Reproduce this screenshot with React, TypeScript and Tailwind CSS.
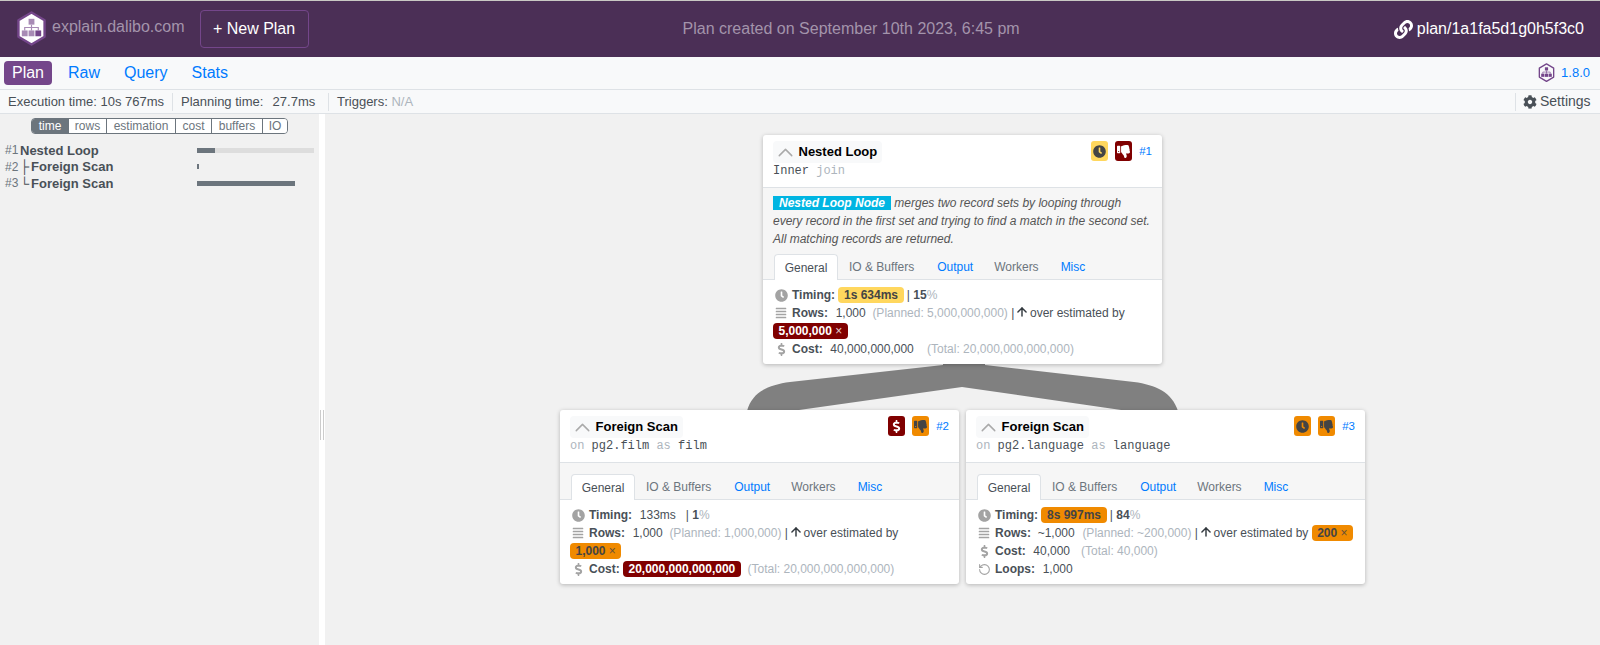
import React from 'react';
import { FaClock, FaThumbsDown, FaDollarSign, FaLink, FaCog, FaAlignJustify } from 'react-icons/fa';
import { ArrowUp, ChevronUp, RotateCcw } from 'lucide-react';

function Logo({ size, dark }: { size: number; dark?: boolean }) {
  return (
    <svg width={size} height={size * 1.13} viewBox="0 0 32 36">
      <path d="M16 1.5 29.5 9.5v17L16 34.500 2.500 26.500v-17z" fill={dark ? 'none' : '#fff'} stroke="#74468a" strokeWidth="2.500" strokeLinejoin="round" />
      <g fill={dark ? '#74468a' : '#a88bb5'}>
        <rect x="13" y="8" width="6" height="6" />
        <rect x="6" y="20" width="6" height="6" />
        <rect x="13" y="20" width="6" height="6" />
        <rect x="20" y="20" width="6" height="6" fill="#74468a" />
      </g>
      <path d="M16 14v6M9 20v-3h14v3" fill="none" stroke={dark ? '#74468a' : '#a88bb5'} strokeWidth="1.200" />
    </svg>
  );
}

function Badge({ color, children }: { color: 'yellow' | 'red' | 'orange'; children: React.ReactNode }) {
  const cls =
    color === 'yellow'
      ? 'bg-[#ffd75e] text-[#444]'
      : color === 'red'
        ? 'bg-[#800000] text-white'
        : 'bg-[#f08a00] text-[#444]';
  return <span className={`flex h-[20px] w-[17px] items-center justify-center rounded-[3px] text-[13px] ${cls}`}>{children}</span>;
}

function Pill({ color, children }: { color: 'yellow' | 'red' | 'orange'; children: React.ReactNode }) {
  const cls =
    color === 'yellow'
      ? 'bg-[#ffd75e] text-[#444]'
      : color === 'red'
        ? 'bg-[#800000] text-white'
        : 'bg-[#f08a00] text-[#444]';
  return <span className={`inline-block rounded-[4px] px-[5.500px] text-[12px] leading-[16px] font-bold ${cls}`}>{children}</span>;
}

function Times() {
  return <span className="font-normal opacity-80"> ×</span>;
}

function Row({ icon, children }: { icon: React.ReactNode; children: React.ReactNode }) {
  return (
    <div className="flex h-[18px] items-center whitespace-pre">
      <span className="mr-[3px] flex w-[16px] shrink-0 items-center justify-center text-[#a3a3a3]">{icon}</span>
      <span>{children}</span>
    </div>
  );
}

function Label({ children }: { children: React.ReactNode }) {
  return <b className="font-bold text-[#495057]">{children}</b>;
}

function Val({ children }: { children: React.ReactNode }) {
  return <span className="ml-[1px]">{children}</span>;
}

function Muted({ children }: { children: React.ReactNode }) {
  return <span className="text-[#adb5bd]">{children}</span>;
}

function Over() {
  return (
    <>
      {' | '}
      <ArrowUp size={14} strokeWidth={2.500} className="mx-[-2.500px] inline align-[-2px] text-[#343a40]" />
      {' over estimated by '}
    </>
  );
}

function Tabs() {
  return (
    <div className="flex h-[26px] items-end border-b border-[#dee2e6] px-[11px] text-[12px]">
      <span className="mb-[-1px] flex h-[26px] w-[64px] items-center justify-center rounded-t-[4px] border border-b-0 border-[#dee2e6] bg-white text-[#495057]">General</span>
      <span className="ml-[11px] flex h-[25px] items-center text-[#6c757d]">IO &amp; Buffers</span>
      <span className="ml-[23px] flex h-[25px] items-center text-[#007bff]">Output</span>
      <span className="ml-[21px] flex h-[25px] items-center text-[#6c757d]">Workers</span>
      <span className="ml-[22px] flex h-[25px] items-center text-[#007bff]">Misc</span>
    </div>
  );
}

function Card({
  className,
  title,
  num,
  badges,
  sub,
  desc,
  children,
}: {
  className: string;
  title: string;
  num: string;
  badges: React.ReactNode;
  sub: React.ReactNode;
  desc?: React.ReactNode;
  children: React.ReactNode;
}) {
  return (
    <div className={`absolute flex w-[399px] flex-col rounded-[3px] bg-white text-[12px] leading-[18px] text-[#495057] shadow-[0_1px_4px_rgba(0,0,0,0.25)] ${className}`}>
      <div className="relative h-[52px] px-[10px] pt-[6px]">
        <div className="flex h-[22px] w-fit items-center rounded-[4px] bg-[#f8f9fa] pr-[5px]">
          <ChevronUp size={25} strokeWidth={1.400} className="text-[#aaaaaa]" />
          <span className="ml-[0.500px] text-[13px] font-bold text-black">{title}</span>
        </div>
        <div className="font-['Liberation_Mono',monospace] text-[12px] leading-[16px] whitespace-pre">{sub}</div>
        <div className="absolute top-[6px] right-[10px] flex items-center gap-[7px]">
          {badges}
          <span className="text-[11.500px] text-[#007bff]">{num}</span>
        </div>
      </div>
      <div className="border-t border-[#dee2e6] bg-[#f6f6f6]">
        {desc ? (
          <div className="h-[66px] px-[10px] pt-[6px] text-[12px] italic text-[#555]">{desc}</div>
        ) : (
          <div className="h-[11px]" />
        )}
        <Tabs />
      </div>
      <div className="px-[10px] py-[6px]">{children}</div>
    </div>
  );
}

const ClockIcon = <FaClock size={13} />;
const Lines = <FaAlignJustify size={12} />;
const Dollar = <FaDollarSign size={13} />;

function Tree() {
  const rows = [
    { n: '#1', branch: '', name: 'Nested Loop', w: 'w-[18px]' },
    { n: '#2', branch: '├', name: 'Foreign Scan', w: 'w-[2px]' },
    { n: '#3', branch: '└', name: 'Foreign Scan', w: 'w-[98px]' },
  ];
  return (
    <div className="mt-[8px]">
      {rows.map((r, i) => (
        <div key={r.n} className="flex h-[16.500px] items-center">
          <span className="ml-[5px] w-[15px] text-[12px] text-[#6c757d]">{r.n}</span>
          <span className="flex-1 text-[13px] font-bold whitespace-pre text-[#495057]">
            {r.branch ? <span className="inline-block w-[11px] font-normal">{r.branch}</span> : null}
            {r.name}
          </span>
          <div className={`mr-[5px] h-[5px] w-[117px] ${i === 0 ? 'bg-[#dddddd]' : ''}`}>
            <div className={`h-full bg-[#6c757d] ${r.w}`} />
          </div>
        </div>
      ))}
    </div>
  );
}

export default function App() {
  const modes = [
    ['rows', 'w-[38px]'],
    ['estimation', 'w-[69px]'],
    ['cost', 'w-[36px]'],
    ['buffers', 'w-[51px]'],
    ['IO', 'w-[25px]'],
  ];
  return (
    <div className="flex h-[645px] flex-col overflow-hidden border-t border-[#c9c9c4] bg-[#f1f1f1] font-['Liberation_Sans',Arial,sans-serif]">
      {/* Top bar */}
      <header className="flex h-[56px] shrink-0 items-center bg-[#4b2f56] px-[16px] text-[16px]">
        <Logo size={31} />
        <span className="mt-[-4px] ml-[5px] text-[#a394ab]">explain.dalibo.com</span>
        <button className="ml-[15px] h-[38px] w-[109px] rounded-[4px] border border-[#74468a] text-white">+ New Plan</button>
        <span className="flex-1 text-center text-[#a394ab]">Plan created on September 10th 2023, 6:45 pm</span>
        <span className="flex items-center gap-[4px] text-white">
          <FaLink size={19} />
          plan/1a1fa5d1g0h5f3c0
        </span>
      </header>

      {/* Nav */}
      <nav className="flex h-[32px] shrink-0 items-center bg-[#f8f9fa] pr-[10px] pl-[4px] text-[16px] text-[#007bff]">
        <span className="flex h-[24px] w-[48px] items-center justify-center rounded-[4px] bg-[#74468a] text-white">Plan</span>
        <span className="ml-[16px]">Raw</span>
        <span className="ml-[24px]">Query</span>
        <span className="ml-[24px]">Stats</span>
        <span className="ml-auto flex items-center gap-[6px] text-[13px]">
          <Logo size={17} dark />
          1.8.0
        </span>
      </nav>

      {/* Stats bar */}
      <div className="flex h-[25px] shrink-0 items-center border-y border-[#dee2e6] bg-[#f8f9fa] text-[13px] whitespace-pre text-[#495057]">
        <span className="flex h-[18px] w-[173px] items-center border-r border-[#dee2e6] pl-[8px]">Execution time: 10s 767ms</span>
        <span className="flex h-[18px] w-[156px] items-center border-r border-[#dee2e6] pl-[8px]">Planning time:  <span className="ml-[2px]">27.7ms</span></span>
        <span className="pl-[8px]">Triggers: <Muted>N/A</Muted></span>
        <span className="ml-auto flex h-[18px] w-[85px] items-center gap-[3px] border-l border-[#dee2e6] pl-[7px] text-[14px]">
          <FaCog size={14} />
          Settings
        </span>
      </div>

      <div className="flex min-h-0 flex-1">
        {/* Sidebar */}
        <aside className="w-[319px] shrink-0">
          <div className="mt-[4px] ml-[31px] flex h-[16px] w-fit overflow-hidden rounded-[4px] border border-[#6c757d] text-[12px] leading-[14px] text-[#6c757d]">
            <span className="w-[36px] bg-[#6c757d] text-center text-white">time</span>
            {modes.map(([m, w]) => (
              <span key={m} className={`border-l border-[#6c757d] bg-white text-center ${w}`}>{m}</span>
            ))}
          </div>
          <Tree />
        </aside>

        {/* Splitter */}
        <div className="flex w-[6px] shrink-0 items-center gap-[2px] bg-white pt-[91px] pl-[1px]">
          <div className="h-[30px] w-[1px] bg-[#cccccc]" />
          <div className="h-[30px] w-[1px] bg-[#cccccc]" />
        </div>

        {/* Plan canvas: nodes sit at free positions on it */}
        <main className="relative flex-1">
          <svg className="absolute top-0 left-0" width="1275" height="531">
            <g transform="translate(-325,-114)" fill="#808080">
              <path d="M943 360V365L790 382C768 385 752 392 747 411H792L962 387V360Z" />
              <path d="M985 360V365L1134 382C1156 385 1172 392 1178 411H1128L962 387V360Z" />
            </g>
          </svg>

          <Card
            className="top-[21px] left-[438px]"
            title="Nested Loop"
            num="#1"
            badges={
              <>
                <Badge color="yellow"><FaClock /></Badge>
                <Badge color="red"><FaThumbsDown /></Badge>
              </>
            }
            sub={<>Inner <Muted>join</Muted></>}
            desc={
              <>
                <b className="bg-[#00b5e2] px-[6px] font-bold text-white">Nested Loop Node</b> merges two record sets by looping through every record in the first set and trying to find a match in the second set. All matching records are returned.
              </>
            }
          >
            <Row icon={ClockIcon}>
              <Label>Timing:</Label> <Pill color="yellow">1s 634ms</Pill> | <b>15</b><Muted>%</Muted>
            </Row>
            <Row icon={Lines}>
              <Label>Rows:</Label>  <Val>1,000</Val>  <Muted>(Planned: 5,000,000,000)</Muted><Over />
            </Row>
            <div className="flex h-[18px] items-center"><Pill color="red">5,000,000<Times /></Pill></div>
            <Row icon={Dollar}>
              <Label>Cost:</Label>  <Val>40,000,000,000</Val>    <Muted>(Total: 20,000,000,000,000)</Muted>
            </Row>
          </Card>

          <Card
            className="top-[296px] left-[235px]"
            title="Foreign Scan"
            num="#2"
            badges={
              <>
                <Badge color="red"><FaDollarSign /></Badge>
                <Badge color="orange"><FaThumbsDown /></Badge>
              </>
            }
            sub={<><Muted>on </Muted>pg2.film<Muted> as </Muted>film</>}
          >
            <Row icon={ClockIcon}>
              <Label>Timing:</Label>  <Val>133ms</Val>   | <b>1</b><Muted>%</Muted>
            </Row>
            <Row icon={Lines}>
              <Label>Rows:</Label>  <Val>1,000</Val>  <Muted>(Planned: 1,000,000)</Muted><Over />
            </Row>
            <div className="flex h-[18px] items-center"><Pill color="orange">1,000<Times /></Pill></div>
            <Row icon={Dollar}>
              <Label>Cost:</Label> <Pill color="red">20,000,000,000,000</Pill>  <Muted>(Total: 20,000,000,000,000)</Muted>
            </Row>
          </Card>

          <Card
            className="top-[296px] left-[641px]"
            title="Foreign Scan"
            num="#3"
            badges={
              <>
                <Badge color="orange"><FaClock /></Badge>
                <Badge color="orange"><FaThumbsDown /></Badge>
              </>
            }
            sub={<><Muted>on </Muted>pg2.language<Muted> as </Muted>language</>}
          >
            <Row icon={ClockIcon}>
              <Label>Timing:</Label> <Pill color="orange">8s 997ms</Pill> | <b>84</b><Muted>%</Muted>
            </Row>
            <Row icon={Lines}>
              <Label>Rows:</Label>  ~1,000  <Val><Muted>(Planned: ~200,000)</Muted></Val><Over /><Pill color="orange">200<Times /></Pill>
            </Row>
            <Row icon={Dollar}>
              <Label>Cost:</Label>  <Val>40,000</Val>   <Val><Muted>(Total: 40,000)</Muted></Val>
            </Row>
            <Row icon={<RotateCcw size={13} />}>
              <Label>Loops:</Label>  <Val>1,000</Val>
            </Row>
          </Card>
        </main>
      </div>
    </div>
  );
}
